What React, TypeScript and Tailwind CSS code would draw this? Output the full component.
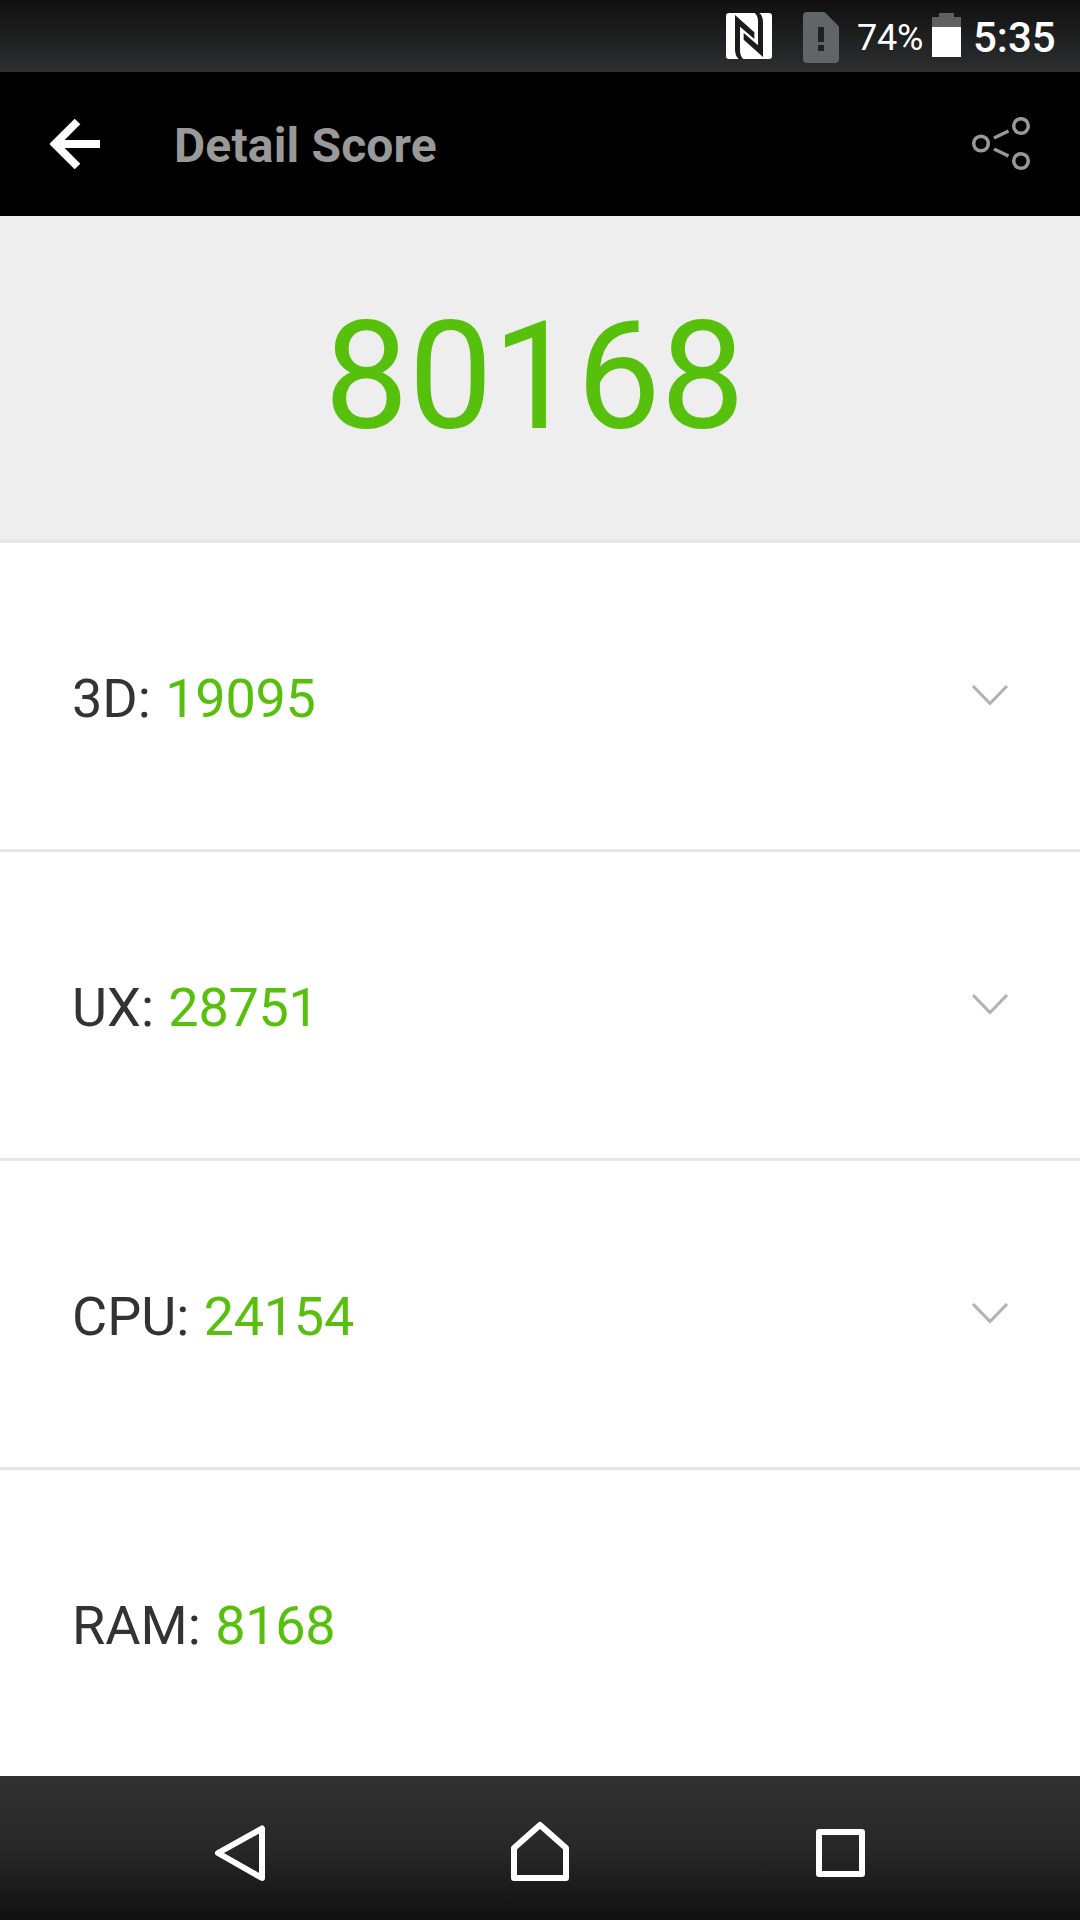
import { useState } from 'react'

interface Score {
  label: string
  value: number
  expandable: boolean
}

const SCORES: Score[] = [
  { label: '3D', value: 19095, expandable: true },
  { label: 'UX', value: 28751, expandable: true },
  { label: 'CPU', value: 24154, expandable: true },
  { label: 'RAM', value: 8168, expandable: false },
]

const TOTAL = SCORES.reduce((sum, s) => sum + s.value, 0)

function NfcIcon() {
  return (
    <svg width="46" height="46" viewBox="0 0 138 138">
      <rect width="138" height="138" rx="9" fill="#fff" />
      {/* two interlocking ribbons */}
      <path d="M27 6L85 58V78L42 41V112Q42 130 52 138H38Q27 130 27 108Z" fill="#1a1b1b" />
      <path d="M111 132L53 80V60L96 97V26Q96 8 86 0H100Q111 8 111 30Z" fill="#1a1b1b" />
    </svg>
  )
}

function SimIcon() {
  return (
    <svg width="36" height="51" viewBox="0 0 36 51">
      <path d="M4 0H21.500L36 14.500V47Q36 51 32 51H4Q0 51 0 47V4Q0 0 4 0Z" fill="#636465" />
      <path d="M15 15H21V30H15ZM15 33H21V39H15Z" fill="#202122" />
    </svg>
  )
}

function BatteryIcon() {
  return (
    <svg width="29" height="44" viewBox="0 0 29 44">
      <path d="M7 0H22V4H29V14H0V4H7Z" fill="#606060" />
      <path d="M0 14H29V44H0Z" fill="#fff" />
    </svg>
  )
}

function StatusBar() {
  return (
    <div className="h-[72px] shrink-0 flex items-start text-white bg-linear-to-b from-[#101010] to-[#2d2f30]">
      <div className="ml-[726px] mt-[13px]"><NfcIcon /></div>
      <div className="ml-[31px] mt-3"><SimIcon /></div>
      <span className="ml-[18px] w-[75px] mt-[17px] text-[36px] leading-[42px] tracking-[-0.2px]">74%</span>
      <div className="mt-[13px]"><BatteryIcon /></div>
      <span className="ml-3 mt-[13px] text-[42px] leading-[49px] font-medium">5:35</span>
    </div>
  )
}

function Toolbar() {
  return (
    <header className="h-36 shrink-0 flex items-center bg-black pl-[50px] pr-[49px]">
      <button aria-label="Back">
        <svg width="50" height="52" viewBox="0 0 50 52" fill="none" stroke="#fff" strokeWidth="8">
          <path d="M27.500 3.500L5 26L27.500 48.500M6 26H50" />
        </svg>
      </button>
      <h1 className="ml-[74px] flex-1 pt-1 text-[48px] leading-[56px] font-bold tracking-[0.15px] text-[#999]">Detail Score</h1>
      <button aria-label="Share">
        <svg width="60" height="54" viewBox="0 0 60 54" fill="none" stroke="#999" strokeWidth="3.500">
          <circle cx="10" cy="26.500" r="7.300" />
          <circle cx="50" cy="9" r="7.300" />
          <circle cx="50" cy="44" r="7.300" />
          <path d="M23 21L37.500 14M23 32L37.500 39" />
        </svg>
      </button>
    </header>
  )
}

function ScoreRow({ score }: { score: Score }) {
  const [open, setOpen] = useState(false)

  return (
    <li className="h-[309px] flex items-center justify-between pl-[72px] pr-[70px] border-b-[3px] border-[#e6e6e6] last:h-[306px] last:border-b-0">
      <p className="pt-[5px] text-[54px] leading-[64px] text-[#333]">
        {score.label}: <span className="ml-px tracking-[-0.3px] text-[#57c00c]">{score.value}</span>
      </p>
      {score.expandable && (
        <button aria-label="Expand" className="mb-0.5" onClick={() => setOpen(!open)}>
          <svg
            width="40" height="24" viewBox="0 0 40 24" fill="none" stroke="#b3b3b3" strokeWidth="3.200"
            className={open ? 'rotate-180' : ''}
          >
            <path d="M3 3L20 20.500L37 3" />
          </svg>
        </button>
      )}
    </li>
  )
}

function NavBar() {
  return (
    <nav className="h-36 shrink-0 flex bg-linear-to-b from-[#313131] via-[#282828] to-[#111]">
      <svg width="1080" height="144" viewBox="0 0 1080 144" fill="none" stroke="#fff" strokeWidth="6" strokeLinejoin="round">
        <path d="M262 52.500V102L218 77Z" />
        <path d="M540 49L566 72V102H514V72Z" />
        <path d="M819 56H862V98H819Z" />
      </svg>
    </nav>
  )
}

export default function App() {
  return (
    <div className="w-[1080px] h-[1920px] flex flex-col overflow-hidden bg-white font-[Roboto,sans-serif]">
      <StatusBar />
      <Toolbar />
      <section className="h-[327px] shrink-0 flex justify-center bg-[#eee] border-b-[3px] border-[#e6e6e6] pt-[73px] pr-[11px]">
        <span className="text-[150px] leading-[176px] tracking-[-0.25px] text-[#57c00c]">{TOTAL}</span>
      </section>
      <ul className="flex-1">
        {SCORES.map((s) => <ScoreRow key={s.label} score={s} />)}
      </ul>
      <NavBar />
    </div>
  )
}
